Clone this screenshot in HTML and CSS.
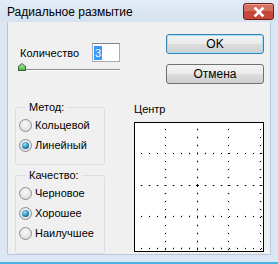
FILE: index.html
```html
<!DOCTYPE HTML><html>
<head>
  <title>Радиальное размытие</title>
  <meta charset="UTF-8">
  <link rel="stylesheet" href="styles.css">
</head>
<body>
<div class="window">
  <div class="titlebar">
    <span class="title">Радиальное размытие</span>
    <div class="close"><svg width="14" height="10" viewBox="0 0 14 10"><path d="M3.5 1.5 L10.5 8.5 M10.5 1.5 L3.5 8.5" stroke="#ffffff" stroke-width="2.6" stroke-linecap="square"/></svg></div>
  </div>
  <div class="frame">
    <div class="content">
      <div class="left">
        <div class="amount-row">
          <span class="label">Количество</span>
          <div class="field"><span class="sel">3</span></div>
        </div>
        <div class="slider"><span class="thumb"></span></div>

        <div class="group group-method">
          <span class="legend">Метод:</span>
          <div class="radio"><span class="dot"></span>Кольцевой</div>
          <div class="radio"><span class="dot on"></span>Линейный</div>
        </div>

        <div class="group group-quality">
          <span class="legend">Качество:</span>
          <div class="radio"><span class="dot"></span>Черновое</div>
          <div class="radio"><span class="dot on"></span>Хорошее</div>
          <div class="radio"><span class="dot"></span>Наилучшее</div>
        </div>
      </div>

      <div class="right">
        <div class="buttons">
          <button class="btn btn-default">OK</button>
          <button class="btn">Отмена</button>
        </div>
        <div class="center-label">Центр</div>
        <svg class="preview" id="preview" width="128" height="128"></svg>
      </div>
    </div>
  </div>
</div>

<script>
  // zoom blur preview: short dashes on a grid, each one pointing to the centre
  var svg = document.getElementById("preview");
  var cx = 62, cy = 62;
  var lines = [30, 62, 93, 125];
  var out = "";
  function dash(x, y) {
    var dx = cx - x, dy = cy - y;
    var len = Math.sqrt(dx*dx + dy*dy);
    if (len == 0) {
      out += '<path d="M' + (x-1) + ' ' + (y+0.5) + 'h3M' + (x+0.5) + ' ' + (y-1) + 'v3" stroke="#000"/>';
      return;
    }
    dx = dx/len*1.6; dy = dy/len*1.6;
    out += '<line x1="' + (x+0.5-dx/2) + '" y1="' + (y+0.5-dy/2) + '" x2="' + (x+0.5+dx/2) + '" y2="' + (y+0.5+dy/2) + '" stroke="#000" stroke-width="1"/>';
  }
  for (var i = 0; i < lines.length; i++) {
    for (var p = 6; p < 128; p += 8) {
      dash(lines[i], p);
      dash(p, lines[i]);
    }
  }
  svg.innerHTML = out;
</script>
</body>
</html>
```

FILE: styles.css
```css
html, body {margin: 0; padding: 0;}
body {width: 278px; height: 264px; overflow: hidden; font-family: "Liberation Sans", Arial, sans-serif; font-size: 11px; color: #000;}

.window {
  width: 278px;
  height: 264px;
  background: #dce7f3;
  display: flex;
  flex-direction: column;
  box-sizing: border-box;
  border-bottom: 2px solid #45b4e0;
}

.titlebar {
  height: 22px;
  flex-shrink: 0;
  display: flex;
  align-items: center;
  justify-content: space-between;
  padding: 0 4px 0 7px;
  background: linear-gradient(#e3ebf5, #d6e2f0);
}
.title {font-size: 12px; color: #000; padding-top: 1px;}

.close {
  flex: 0 0 29px;
  height: 15px;
  margin-top: 1px;
  border: 1px solid #6e1d14;
  border-radius: 3px;
  display: flex;
  align-items: center;
  justify-content: center;
  background: #c4473a;
  box-shadow: inset 0 1px 0 #e8a394, inset 0 7px 0 #d4705f;
}

.frame {
  flex: 1;
  min-height: 0;
  padding: 0 7px 7px 7px;
  display: flex;
}
.content {
  flex: 1;
  background: #f0f0f0;
  border: 1px solid #b8c6d8;
  border-top: none;
  display: flex;
  padding: 0 6px 0 7px;
}

.left {width: 106px; display: flex; flex-direction: column;}

.amount-row {display: flex; align-items: center; margin-top: 21px; padding-left: 5px;}
.label {width: 72px;}
.field {
  width: 25px;
  height: 17px;
  border: 1px solid #a5acb5;
  border-top-color: #7a838e;
  background: #fff;
  display: flex;
  align-items: center;
  padding-left: 1px;
}
.sel {background: #3399ff; color: #fff; padding: 0 1px; line-height: 14px;}

.slider {position: relative; height: 1px; margin: 7px 0 0 5px; width: 100px; background: #8c8c8c; border-bottom: 1px solid #fff;}
.thumb {
  position: absolute;
  left: -2px;
  top: -6px;
  width: 8px;
  height: 8px;
  background: #2f6b2f;
  clip-path: polygon(50% 0, 100% 45%, 100% 100%, 0 100%, 0 45%);
}
.thumb:after {
  content: "";
  position: absolute;
  left: 1px; top: 1px; right: 1px; bottom: 1px;
  background: linear-gradient(#bfe6b3, #52b548);
  clip-path: polygon(50% 0, 100% 45%, 100% 100%, 0 100%, 0 45%);
}

.group {
  position: relative;
  border: 1px solid #d5dfe5;
  border-radius: 3px;
  padding: 7px 0 9px 3px;
  width: 85px;
}
.group-method {margin-top: 36px;}
.group-quality {margin-top: 10px; padding-bottom: 10px;}
.legend {
  position: absolute;
  top: -7px;
  left: 10px;
  padding: 0 3px;
  line-height: 13px;
  background: #f0f0f0;
}

.radio {display: flex; align-items: center; height: 20px;}
.dot {
  width: 11px;
  height: 11px;
  border-radius: 50%;
  border: 1px solid #8e8f8f;
  background: radial-gradient(circle at 50% 40%, #fbfbfb, #d4d4d4);
  margin-right: 3px;
  position: relative;
}
.dot.on:after {
  content: "";
  position: absolute;
  left: 2px; top: 2px;
  width: 7px; height: 7px;
  border-radius: 50%;
  background: radial-gradient(circle at 40% 35%, #a3e2fa, #1a7fb0 60%, #0d4c6e);
}

.right {flex: 1; display: flex; flex-direction: column; align-items: flex-end;}
.buttons {display: flex; flex-direction: column; gap: 10px; margin-top: 12px;}
.btn {
  width: 98px;
  height: 20px;
  border: 1px solid #707070;
  border-radius: 3px;
  background: linear-gradient(#f2f2f2 0%, #ebebeb 50%, #dddddd 51%, #cfcfcf 100%);
  font-family: "Liberation Sans", Arial, sans-serif;
  font-size: 12px;
  padding: 0;
  color: #000;
}
.btn-default {border-color: #3c7fb1; box-shadow: inset 0 0 0 1px #a7e1f8;}

.center-label {width: 130px; margin-top: 19px; line-height: 13px;}
.preview {margin-top: 6px; border: 1px solid #000; background: #fff; flex-shrink: 0;}
```
